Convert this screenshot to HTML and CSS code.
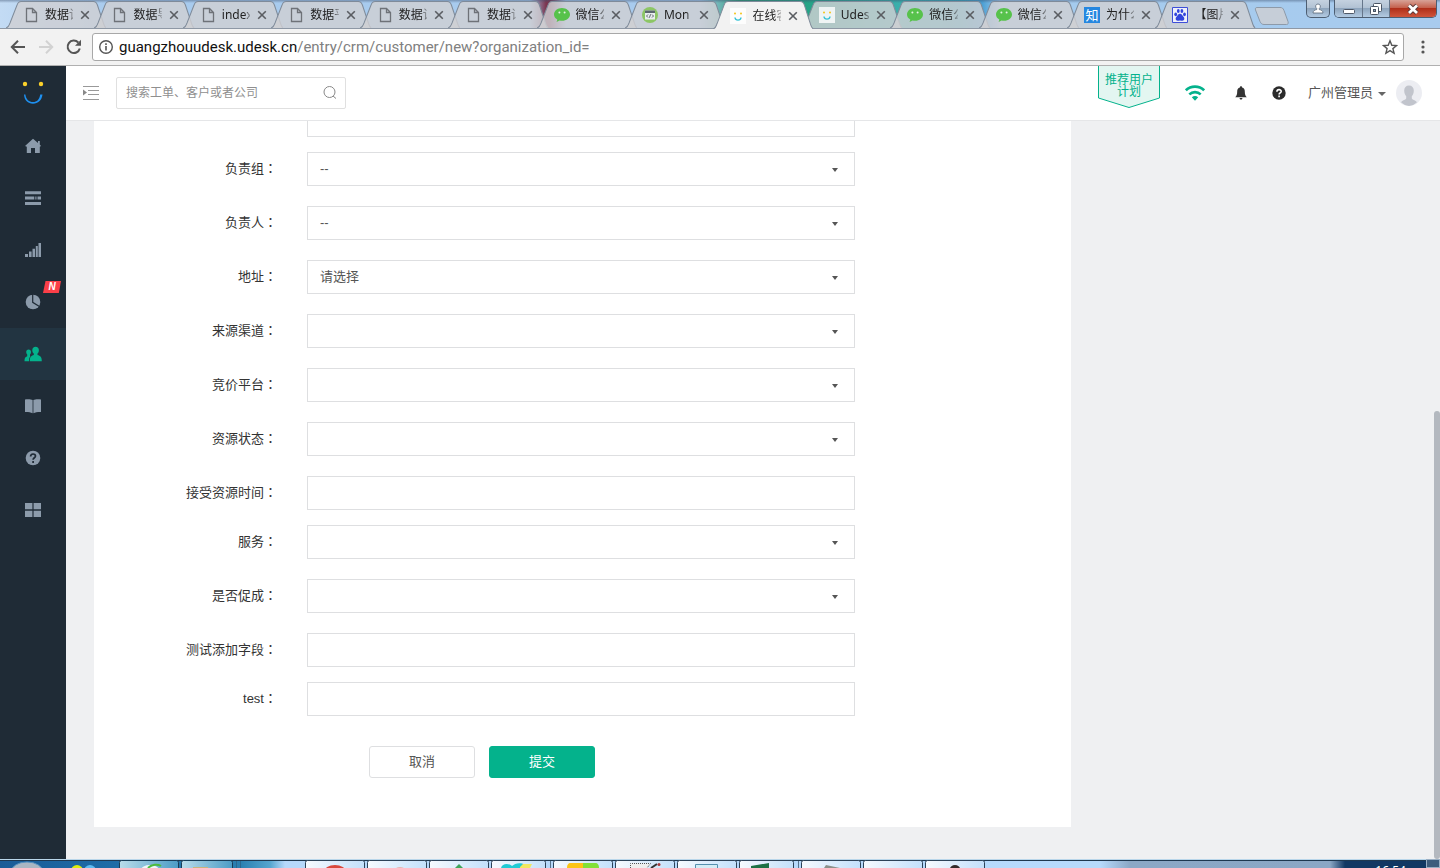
FILE: index.html
```html
<!DOCTYPE html>
<html lang="zh-CN">
<head>
<meta charset="utf-8">
<title>在线客服</title>
<link rel="stylesheet" href="styles.css">
</head>
<body>
<svg class="defs" aria-hidden="true">
  <symbol id="i-file" viewBox="0 0 16 16"><path d="M3.500 1.500h6l4 4v9h-10zM9.500 1.500v4h4" fill="none" stroke="#6e7278" stroke-width="1.300"/></symbol>
  <symbol id="i-wechat" viewBox="0 0 16 16"><path d="M8 1C3.600 1 0 3.800 0 7.400c0 2.200 1.300 3.900 3.300 5L2.600 15l3-1.600c.8.2 1.600.3 2.400.3 4.400 0 8-2.800 8-6.300S12.400 1 8 1z" fill="#57c24b"/><circle cx="5.400" cy="5.500" r="1" fill="#e4f3e2"/><circle cx="10.600" cy="5.500" r="1" fill="#e4f3e2"/></symbol>
  <symbol id="i-udesk" viewBox="0 0 16 16"><path d="M0 0h16v16H0z" fill="#fff" fill-opacity=".8"/><circle cx="5" cy="5.500" r="1" fill="#f5c518"/><circle cx="11" cy="5.500" r="1" fill="#f5c518"/><path d="M5 9.500c.4 3.500 5.600 3.500 6 0" fill="none" stroke="#35c3d6" stroke-width="1.400"/></symbol>
  <symbol id="i-x" viewBox="0 0 10 10"><path d="M1.200 1.200l7.600 7.600M8.800 1.200L1.200 8.800" stroke="#5a5d62" stroke-width="1.600"/></symbol>
  <symbol id="i-shape" viewBox="0 0 100 28" preserveAspectRatio="none"><path d="M0 28C3 27 3 25 4 23L11 5C12 2 13 1.500 15 1.500H87C89 1.500 90 2 91 5L97 23C98 26 98 27 100 28" stroke-width="1"/></symbol>
</svg>

<header class="browser">
  <div class="strip">
    <nav class="tabs" aria-label="标签页">
      <div class="tab"><svg class="tab-shape"><use href="#i-shape"/></svg><svg class="fav"><use href="#i-file"/></svg><span class="tab-title">数据记录</span><button class="tab-x" aria-label="关闭"><svg><use href="#i-x"/></svg></button></div>
      <div class="tab"><svg class="tab-shape"><use href="#i-shape"/></svg><svg class="fav"><use href="#i-file"/></svg><span class="tab-title">数据导出</span><button class="tab-x" aria-label="关闭"><svg><use href="#i-x"/></svg></button></div>
      <div class="tab"><svg class="tab-shape"><use href="#i-shape"/></svg><svg class="fav"><use href="#i-file"/></svg><span class="tab-title">index</span><button class="tab-x" aria-label="关闭"><svg><use href="#i-x"/></svg></button></div>
      <div class="tab"><svg class="tab-shape"><use href="#i-shape"/></svg><svg class="fav"><use href="#i-file"/></svg><span class="tab-title">数据平台</span><button class="tab-x" aria-label="关闭"><svg><use href="#i-x"/></svg></button></div>
      <div class="tab"><svg class="tab-shape"><use href="#i-shape"/></svg><svg class="fav"><use href="#i-file"/></svg><span class="tab-title">数据记录</span><button class="tab-x" aria-label="关闭"><svg><use href="#i-x"/></svg></button></div>
      <div class="tab"><svg class="tab-shape"><use href="#i-shape"/></svg><svg class="fav"><use href="#i-file"/></svg><span class="tab-title">数据记录</span><button class="tab-x" aria-label="关闭"><svg><use href="#i-x"/></svg></button></div>
      <div class="tab"><svg class="tab-shape"><use href="#i-shape"/></svg><svg class="fav"><use href="#i-wechat"/></svg><span class="tab-title">微信公众</span><button class="tab-x" aria-label="关闭"><svg><use href="#i-x"/></svg></button></div>
      <div class="tab"><svg class="tab-shape"><use href="#i-shape"/></svg><svg class="fav" viewBox="0 0 16 16"><circle cx="8" cy="8" r="8" fill="#8cc665"/><rect x="3" y="3.500" width="10" height="9" fill="#e9edf0"/><path d="M3 3.500h10v2.500H3z" fill="#5c6770"/><path d="M6 7.500L4.500 9 6 10.500M10 7.500L11.500 9 10 10.500M8.600 7.300l-1.200 3.400" fill="none" stroke="#4d565e" stroke-width=".9"/></svg><span class="tab-title">Mon</span><button class="tab-x" aria-label="关闭"><svg><use href="#i-x"/></svg></button></div>
      <div class="tab tab-active"><svg class="tab-shape"><use href="#i-shape"/></svg><svg class="fav"><use href="#i-udesk"/></svg><span class="tab-title">在线客服</span><button class="tab-x" aria-label="关闭"><svg><use href="#i-x"/></svg></button></div>
      <div class="tab"><svg class="tab-shape"><use href="#i-shape"/></svg><svg class="fav"><use href="#i-udesk"/></svg><span class="tab-title">Udesk</span><button class="tab-x" aria-label="关闭"><svg><use href="#i-x"/></svg></button></div>
      <div class="tab"><svg class="tab-shape"><use href="#i-shape"/></svg><svg class="fav"><use href="#i-wechat"/></svg><span class="tab-title">微信公众</span><button class="tab-x" aria-label="关闭"><svg><use href="#i-x"/></svg></button></div>
      <div class="tab"><svg class="tab-shape"><use href="#i-shape"/></svg><svg class="fav"><use href="#i-wechat"/></svg><span class="tab-title">微信公众</span><button class="tab-x" aria-label="关闭"><svg><use href="#i-x"/></svg></button></div>
      <div class="tab"><svg class="tab-shape"><use href="#i-shape"/></svg><span class="fav fav-zhi">知</span><span class="tab-title">为什么</span><button class="tab-x" aria-label="关闭"><svg><use href="#i-x"/></svg></button></div>
      <div class="tab"><svg class="tab-shape"><use href="#i-shape"/></svg><svg class="fav" viewBox="0 0 16 16"><path d="M.5.5h15v15H.5z" fill="#eef0fb" stroke="#3e4fd8"/><g fill="#3244dc"><ellipse cx="3.700" cy="7.300" rx="1.400" ry="1.900"/><ellipse cx="6.300" cy="4" rx="1.400" ry="1.900"/><ellipse cx="9.900" cy="4" rx="1.400" ry="1.900"/><ellipse cx="12.500" cy="7.300" rx="1.400" ry="1.900"/><path d="M8 6.800c2 0 2 1.600 3.300 2.700 1.800 1.600 1.100 4.200-.8 4.200-1 0-1.500-.3-2.500-.3s-1.500.3-2.500.3c-1.900 0-2.600-2.600-.8-4.200C6 8.400 6 6.800 8 6.800z"/></g></svg><span class="tab-title">【图片】</span><button class="tab-x" aria-label="关闭"><svg><use href="#i-x"/></svg></button></div>
    </nav>
    <button class="new-tab" aria-label="新标签页"><svg viewBox="0 0 36 18"><path d="M3 .5h23c2 0 3 .5 4 3l4 11c.6 2 0 3-1.500 3H10c-2 0-3-1-4-3L1.500 3C1 1.500 1.500.5 3 .5z" fill="#c6ced8" stroke="#8d9aa9"/></svg></button>
    <div class="win">
      <button class="win-btn win-user" aria-label="用户"><svg viewBox="0 0 12 12"><path d="M6 1a2.400 2.400 0 0 1 1.300 4.400v1.200c2.200.3 3.700 1.300 3.700 3.400H1c0-2.100 1.500-3.100 3.700-3.400V5.400A2.400 2.400 0 0 1 6 1z" fill="#fff" stroke="#59687a" stroke-width=".8"/></svg></button>
      <div class="win-group">
        <button class="win-btn win-min" aria-label="最小化"><svg viewBox="0 0 12 12"><rect x=".5" y="6.500" width="11" height="4" rx="1" fill="#fff" stroke="#4f5968"/></svg></button>
        <button class="win-btn win-max" aria-label="还原"><svg viewBox="0 0 12 12"><g fill="#fff" stroke="#4a5564"><rect x="3.500" y=".5" width="8" height="8" rx="1"/><rect x=".5" y="3.500" width="8" height="8" rx="1"/><rect x="3.500" y="6.500" width="2" height="2" fill="#8ea5bd"/></g></svg></button>
        <button class="win-btn win-close" aria-label="关闭窗口"><svg viewBox="0 0 12 12"><path d="M2 2.500l8 7.500M10 2.500L2 10" stroke="#5b3a3a" stroke-width="4.600"/><path d="M2 2.500l8 7.500M10 2.500L2 10" stroke="#fff" stroke-width="2.800"/></svg></button>
      </div>
    </div>
  </div>
  <div class="toolbar">
    <button class="tool" aria-label="后退"><svg viewBox="0 0 16 16"><path d="M15 8H2.500M8 1.800L1.800 8 8 14.200" fill="none" stroke="#555" stroke-width="2"/></svg></button>
    <button class="tool" aria-label="前进"><svg viewBox="0 0 16 16"><path d="M1 8h12.500M8 1.800L14.200 8 8 14.200" fill="none" stroke="#d2d2d2" stroke-width="2"/></svg></button>
    <button class="tool" aria-label="刷新"><svg viewBox="0 0 16 16"><path d="M13.800 9.500A6.200 6.200 0 1 1 12.300 3.500" fill="none" stroke="#555" stroke-width="2"/><path d="M15 .8v6H9z" fill="#555"/></svg></button>
    <div class="omnibox">
      <svg class="info" viewBox="0 0 16 16"><circle cx="8" cy="8" r="6.300" fill="none" stroke="#555" stroke-width="1.400"/><path d="M8 7v4.500M8 4.300v1.600" stroke="#555" stroke-width="1.600"/></svg>
      <div class="url" role="textbox" aria-label="地址栏" contenteditable="true" spellcheck="false">guangzhouudesk.udesk.cn<span class="url-path">/entry/crm/customer/new?organization_id=</span></div>
      <button class="star" aria-label="收藏"><svg viewBox="0 0 16 16"><path d="M8 1.800l1.800 4.500 4.800.3-3.700 3 1.200 4.700L8 11.700l-4.100 2.600 1.200-4.700-3.700-3 4.800-.3z" fill="none" stroke="#555" stroke-width="1.400"/></svg></button>
    </div>
    <button class="more" aria-label="菜单"><svg viewBox="0 0 4 14"><g fill="#555"><circle cx="2" cy="2" r="1.600"/><circle cx="2" cy="7" r="1.600"/><circle cx="2" cy="12" r="1.600"/></g></svg></button>
  </div>
</header>

<div class="app">
  <nav class="side" aria-label="主导航">
    <a class="logo" href="#" aria-label="Udesk"><svg viewBox="0 0 22 24"><circle cx="3" cy="3" r="2.200" fill="#fbd02b"/><circle cx="19" cy="3" r="2.200" fill="#fbd02b"/><path d="M2 13.500c.3 6 4 9.200 9 9.200s8.800-3.200 9.500-9.200h-2.300c-.7 5-3.200 7.500-7.200 7.500s-7-2.500-7.600-7.500z" fill="#1e90f0"/></svg></a>
    <a class="nav" href="#" aria-label="首页"><svg viewBox="0 0 16 16"><path d="M8 .8L13 5V3h1.800v3.500L16 8l-1.200.8V15H10v-5H6v5H1.800V8.800L0 8z"/></svg></a>
    <a class="nav" href="#" aria-label="工单"><svg viewBox="0 0 16 16"><path d="M0 1.200h16v3H0zM0 6.500h9.300v3H0zM10.300 6.500h1.200v3h-1.200zM12.500 6.500H16v3h-3.500zM0 12h16v3H0z"/></svg></a>
    <a class="nav" href="#" aria-label="报表"><svg viewBox="0 0 16 16"><path d="M0 12h3v3H0zM4 9.500h2.600V15H4zM7.500 6.800H10V15H7.500zM10.800 4h2v11h-2zM13.500 1H16v14h-2.500z"/></svg></a>
    <a class="nav" href="#" aria-label="统计"><svg viewBox="0 0 16 16"><circle cx="8" cy="8" r="7.300"/><path d="M7.700 0v8.300l6.300 3.900" fill="none" stroke="#1f2b36" stroke-width="1.200"/></svg><span class="new">N</span></a>
    <a class="nav nav-on" href="#" aria-label="客户"><svg viewBox="0 0 16 16"><path d="M3.600 3.400C5.100 3.400 6 4.500 6 6c0 1.100-.4 1.900-1 2.500v1.400l.4.300C4.300 11.300 4 12.600 4 15.200H-.5c0-3.200.6-4.300 2.700-5V8.500C1.600 7.900 1.200 7.100 1.200 6c0-1.500.9-2.600 2.400-2.600z"/><path d="M10.600.8c2 0 3.300 1.500 3.300 3.400 0 1.600-.6 2.700-1.400 3.400v1.300c2.800.8 4.300 1.800 4.300 6.300H4.800c0-4.500 1.300-5.500 4-6.300V7.600C7.900 6.900 7.300 5.800 7.300 4.200 7.300 2.300 8.600.8 10.600.8z"/></svg></a>
    <a class="nav" href="#" aria-label="知识库"><svg viewBox="0 0 16 16"><path d="M0 1.500C3 .8 6 1.200 7.600 2v13.200C5.500 14.400 3 13.800 0 14zM16 1.500C13 .8 10 1.200 8.400 2v13.200c2.100-.8 4.600-1.400 7.600-1.200z"/></svg></a>
    <a class="nav" href="#" aria-label="帮助"><svg viewBox="0 0 16 16"><circle cx="8" cy="8" r="7.300"/><path d="M5.600 6.500c0-3.300 4.900-3.200 4.900-.4 0 1.700-2.400 1.700-2.400 3.700M8.100 10.900v2" fill="none" stroke="#1f2b36" stroke-width="1.700"/></svg></a>
    <a class="nav" href="#" aria-label="应用"><svg viewBox="0 0 16 16"><path d="M0 1h7.400v6.200H0zM8.600 1H16v6.200H8.600zM0 8.800h7.400V15H0zM8.600 8.800H16V15H8.600z"/></svg></a>
  </nav>

  <div class="main">
    <header class="top">
      <button class="fold" aria-label="展开菜单"><svg viewBox="0 0 16 14"><path d="M0 .5h16M5 4.500h11M5 8.500h11M0 13.500h16" stroke="#999"/><path d="M0 3.500l4 3-4 3z" fill="#888"/></svg></button>
      <form class="search">
        <input class="search-input" type="text" aria-label="搜索" placeholder="搜索工单、客户或者公司">
        <button class="search-btn" type="button" aria-label="搜索"><svg viewBox="0 0 14 14"><circle cx="6.500" cy="6" r="5.500" fill="none" stroke="#888"/><path d="M10 10l3 2.500" stroke="#888"/></svg></button>
      </form>
      <a class="plan" href="#"><svg class="plan-bg" viewBox="0 0 62 42"><path d="M.5-1v33L31 41.500 61.500 32V-1z" fill="#e3f6f1" stroke="#04b28c"/></svg><span class="plan-text">推荐用户<br>计划</span></a>
      <button class="ico wifi" aria-label="网络"><svg viewBox="0 0 20 16"><g fill="none" stroke="#04b28c" stroke-width="2.600"><path d="M.9 5.300c5-4.900 13.200-4.900 18.200 0M4.300 9.400c3.200-3.100 8.200-3.100 11.400 0"/></g><path d="M6.800 12.300c1.900-1.900 4.500-1.900 6.400 0L10 15.800z" fill="#04b28c"/></svg></button>
      <button class="ico bell" aria-label="通知"><svg viewBox="0 0 12 14"><path d="M6 .3c.7 0 1.100.5 1.100 1.200 2 .5 2.700 2 2.700 4 0 3 .6 4.300 2 5.700H.2c1.400-1.400 2-2.700 2-5.700 0-2 .7-3.500 2.700-4C4.900.8 5.300.3 6 .3zM4.600 12h2.800c0 1-.6 1.500-1.400 1.500S4.600 13 4.600 12z" fill="#333"/></svg></button>
      <button class="ico help" aria-label="帮助"><svg viewBox="0 0 14 14"><circle cx="7" cy="7" r="6.700" fill="#2b2b2b"/><path d="M4.900 5.700c0-2.800 4.300-2.700 4.300-.3 0 1.500-2.100 1.500-2.100 3.100M7.100 9.600v1.700" fill="none" stroke="#fff" stroke-width="1.600"/></svg></button>
      <button class="user"><span>广州管理员</span><i class="user-caret"></i></button>
      <svg class="avatar" viewBox="0 0 26 26"><circle cx="13" cy="13" r="13" fill="#ecedf2"/><path d="M13 5.500c3 0 4.800 2 4.800 5s-1 4.500-2 5.800v2c0 1.700 4.200 1.700 5 4.200A13 13 0 0 1 13 26a13 13 0 0 1-7.800-3.500c.8-2.500 5-2.500 5-4.200v-2c-1-1.300-2-2.800-2-5.800s1.800-5 4.800-5z" fill="#c1c4cc"/></svg>
    </header>

    <main class="content">
      <form class="card">
        <div class="row row-text"><label for="f0"></label><input id="f0" class="field" type="text" aria-label="字段"></div>
        <div class="row"><label for="f1">负责组<span class="colon" lang="zh-Hant">：</span></label><div class="pick"><select id="f1" class="field"><option>--</option></select></div></div>
        <div class="row"><label for="f2">负责人<span class="colon" lang="zh-Hant">：</span></label><div class="pick"><select id="f2" class="field"><option>--</option></select></div></div>
        <div class="row"><label for="f3">地址<span class="colon" lang="zh-Hant">：</span></label><div class="pick"><select id="f3" class="field"><option>请选择</option></select></div></div>
        <div class="row"><label for="f4">来源渠道<span class="colon" lang="zh-Hant">：</span></label><div class="pick"><select id="f4" class="field"><option></option></select></div></div>
        <div class="row"><label for="f5">竞价平台<span class="colon" lang="zh-Hant">：</span></label><div class="pick"><select id="f5" class="field"><option></option></select></div></div>
        <div class="row"><label for="f6">资源状态<span class="colon" lang="zh-Hant">：</span></label><div class="pick"><select id="f6" class="field"><option></option></select></div></div>
        <div class="row row-text"><label for="f7">接受资源时间<span class="colon" lang="zh-Hant">：</span></label><input id="f7" class="field" type="text"></div>
        <div class="row"><label for="f8">服务<span class="colon" lang="zh-Hant">：</span></label><div class="pick"><select id="f8" class="field"><option></option></select></div></div>
        <div class="row"><label for="f9">是否促成<span class="colon" lang="zh-Hant">：</span></label><div class="pick"><select id="f9" class="field"><option></option></select></div></div>
        <div class="row row-text"><label for="f10">测试添加字段<span class="colon" lang="zh-Hant">：</span></label><input id="f10" class="field" type="text"></div>
        <div class="row row-text"><label for="f11">test<span class="colon" lang="zh-Hant">：</span></label><input id="f11" class="field" type="text"></div>
        <div class="actions"><button class="btn" type="button">取消</button><button class="btn btn-main" type="button">提交</button></div>
      </form>
      <div class="thumb"></div>
    </main>
  </div>
</div>

<footer class="taskbar">
  <svg class="tasks" viewBox="0 0 1000 9" aria-hidden="true">
    <defs>
      <linearGradient id="g1"><stop offset="0" stop-color="#f6faff"/><stop offset="1" stop-color="#c3e0fb"/></linearGradient>
      <linearGradient id="g2"><stop offset="0" stop-color="#b9dcea"/><stop offset="1" stop-color="#4b9cc6"/></linearGradient>
    </defs>
    <ellipse cx="27" cy="13" rx="16" ry="10" fill="#aab6c2" stroke="#5591bf"/>
    <circle cx="77" cy="12" r="6" fill="#dfee0c"/><circle cx="90" cy="12" r="6" fill="#5fbcf2"/>
    <g fill="url(#g2)" stroke="#173d58"><rect x="119.500" y="1.500" width="59" height="14" rx="2"/><rect x="181.500" y="1.500" width="51" height="14" rx="2"/></g>
    <path d="M236.500 2v8M240.500 2v8" stroke="#2a6890"/>
    <g fill="url(#g1)" stroke="#2c4258">
      <rect x="305.500" y="1.500" width="59" height="14" rx="2"/><rect x="367.500" y="1.500" width="59" height="14" rx="2"/><rect x="429.500" y="1.500" width="59" height="14" rx="2"/><rect x="491.500" y="1.500" width="54" height="14" rx="2"/>
      <rect x="553.500" y="1.500" width="59" height="14" rx="2"/><rect x="615.500" y="1.500" width="59" height="14" rx="2"/><rect x="677.500" y="1.500" width="59" height="14" rx="2"/><rect x="739.500" y="1.500" width="54" height="14" rx="2"/>
      <rect x="801.500" y="1.500" width="59" height="14" rx="2"/><rect x="863.500" y="1.500" width="59" height="14" rx="2"/><rect x="925.500" y="1.500" width="59" height="14" rx="2"/>
    </g>
    <path d="M550.500 2v8M798.500 2v8" stroke="#57738d"/>
    <ellipse cx="150" cy="11" rx="9" ry="5" fill="#eef7f8"/><path d="M148 9c4-4 10-4 13-2" fill="none" stroke="#4dbb3c" stroke-width="2"/>
    <path d="M193 8h15v1h-15z" fill="#c9b37c"/>
    <ellipse cx="335" cy="13" rx="11" ry="7" fill="#d8483d"/><ellipse cx="400" cy="12" rx="6" ry="4" fill="#e3b8b4"/>
    <path d="M455 9l4-4 4 4z" fill="#3fa45b"/>
    <path d="M501 9c1-5 8-5 11-2 3-3 9-4 14-1l-4 3z" fill="#20cbd5"/><path d="M520 8l3-3h9l-2 4h-10z" fill="#f2e860"/>
    <path d="M567 9c0-3 1-5 4-5h12v5z" fill="#fcc415"/><path d="M583 4h12c3 0 4 2 4 5h-16z" fill="#82e038"/>
    <path d="M630.500 9V4.500h20L647 9" fill="#eee" stroke="#555" stroke-dasharray="1 1"/><path d="M651 9l6-4" stroke="#333" stroke-width="2"/><circle cx="659" cy="5.500" r="1.500" fill="#a9383b"/>
    <path d="M695.500 9V5.500h22V9" fill="#d4ecf6" stroke="#558fae"/>
    <path d="M751 9V7l18-3v5z" fill="#1c7145"/><path d="M826 6l14 3h-16z" fill="#8c918c"/><ellipse cx="955" cy="10" rx="5" ry="4" fill="#332b2b"/>
  </svg>
  <div class="tray"><time class="clock">16:54</time><button class="desktop" aria-label="显示桌面"></button></div>
</footer>
</body>
</html>
```
FILE: styles.css
```css
* { box-sizing: border-box; }
body {
  margin: 0;
  height: 100vh;
  display: flex;
  flex-direction: column;
  overflow: hidden;
  font: 13px/20px "Liberation Sans", "Noto Sans CJK SC", sans-serif;
  color: #333;
}
button, input, select { font: inherit; color: inherit; }
button { padding: 0; border: 0; background: none; cursor: pointer; }
svg { display: block; }
a { color: inherit; text-decoration: none; }
.defs { display: none; }

/* browser chrome */
.browser { flex: none; }
.strip {
  display: flex;
  height: 29px;
  padding: 0 3px 0 6px;
  background:
    linear-gradient(rgba(60, 80, 110, .45), rgba(60, 80, 110, 0) 3px),
    linear-gradient(90deg, #c3dbf4 0, #a8cbee 110px, #a8cbee 530px, #7b3550 546px, #7b3550 550px, #a8cbee 566px, #a8cbee 700px, #2d9c74 740px, #25a385 805px, #3aafac 900px, #36a6bb 960px, #4a9fd4 982px, #a4cbee 1000px, #a8cbee 1440px);
  border-bottom: 1px solid #8e98a5;
}
.tabs { flex: 1; display: flex; min-width: 0; }
.tab {
  position: relative;
  flex: 1 1 0;
  min-width: 0;
  display: flex;
  align-items: center;
  height: 28px;
  padding: 2px 13px 0 17px;
  font: 12px/18px "Noto Sans", "Noto Sans CJK SC", sans-serif;
  color: #222;
}
.tab + .tab { margin-left: -12px; }
.tab-shape { position: absolute; left: 0; top: 0; width: 100%; height: 28px; fill: #cfd0d3; fill-opacity: .82; stroke: #7f8b9a; }
.tab-active { z-index: 1; height: 29px; margin-bottom: -1px; }
.tab-active .tab-shape { height: 29px; fill: #f2f2f2; fill-opacity: 1; }
.fav { position: relative; flex: none; width: 16px; height: 16px; }
.fav-zhi { background: #2587e0; color: #fff; font-size: 13px; line-height: 16px; text-align: center; }
.tab-title {
  position: relative;
  flex: 1;
  min-width: 0;
  margin-left: 6px;
  overflow: hidden;
  white-space: nowrap;
  -webkit-mask-image: linear-gradient(90deg, #000 22px, transparent 31px);
  mask-image: linear-gradient(90deg, #000 22px, transparent 31px);
}
.tab-x { position: relative; width: 10px; height: 10px; margin: 0 3px 0 7px; }
.tab-x svg { width: 10px; height: 10px; }
.new-tab { width: 36px; height: 18px; margin: 7px 16px 0 -2px; }
.new-tab svg { width: 36px; height: 18px; }
.win { display: flex; gap: 4px; align-items: flex-start; }
.win-btn {
  display: flex;
  align-items: center;
  justify-content: center;
  height: 18px;
  background: linear-gradient(#c5d2e0, #b0c1d3 48%, #8ea5bd 50%, #b3cbe2);
}
.win-btn svg { width: 12px; height: 12px; }
.win-user, .win-group { border: 1px solid #4d5e72; border-top: 0; border-radius: 0 0 5px 5px; overflow: hidden; }
.win-user { width: 24px; }
.win-group { display: flex; }
.win-group .win-btn { height: 17px; border-right: 1px solid #66768a; }
.win-min { width: 28px; }
.win-max { width: 27px; }
.win-group .win-close { width: 46px; border-right: 0; background: linear-gradient(#d8a397, #c4604c 46%, #b0301a 50%, #d0553b); }

.toolbar {
  display: flex;
  align-items: center;
  height: 37px;
  padding: 0 15px 1px 10px;
  background: #f2f2f2;
  border-bottom: 1px solid #b0b0b0;
}
.tool { width: 16px; height: 16px; margin-right: 12px; }
.tool svg { width: 16px; height: 16px; }
.tool + .tool + .tool { margin-right: 10px; }
.omnibox {
  flex: 1;
  display: flex;
  align-items: center;
  height: 28px;
  padding: 0 5px;
  border: 1px solid #a8a8a8;
  border-radius: 3px;
  background: #fff;
}
.info { width: 16px; height: 16px; }
.url { flex: 1; margin-left: 5px; font: 15px/24px Roboto, sans-serif; color: #111; white-space: nowrap; outline: 0; }
.url-path { color: #808080; }
.star svg { width: 16px; height: 16px; }
.more { width: 4px; margin-left: 17px; }
.more svg { width: 4px; height: 14px; }

/* application */
.app { flex: 1; display: flex; min-height: 0; }
.side { flex: none; width: 66px; background: #1f2b36; }
.logo { display: flex; justify-content: center; height: 54px; padding-top: 15px; }
.logo svg { width: 22px; height: 24px; }
.nav { position: relative; display: flex; align-items: center; justify-content: center; height: 52px; fill: #8c9bab; }
.nav svg { width: 16px; height: 16px; overflow: visible; }
.nav-on { background: #223441; fill: #04b28c; }
.new {
  position: absolute;
  left: 43px;
  top: 5px;
  width: 18px;
  height: 12px;
  background: #fb3f48;
  clip-path: polygon(14% 0, 100% 0, 88% 100%, 0 100%);
  color: #fff;
  font: italic bold 10px/12px "Liberation Sans", sans-serif;
  text-align: center;
}
.main { flex: 1; min-width: 0; display: flex; flex-direction: column; }
.top {
  flex: none;
  display: flex;
  align-items: center;
  height: 55px;
  padding: 0 18px 0 17px;
  background: #fff;
  border-bottom: 1px solid #e5e6e8;
}
.fold svg { width: 16px; height: 14px; }
.search { display: flex; align-items: center; width: 230px; height: 32px; margin: 0 auto 0 17px; border: 1px solid #e0e0e0; border-radius: 2px; }
.search-input { flex: 1; min-width: 0; padding: 0 0 0 9px; border: 0; outline: 0; background: none; font-size: 12px; }
.search-input::placeholder { color: #8f8f8f; opacity: 1; }
.search-btn { margin-right: 8px; }
.search-btn svg { width: 14px; height: 14px; }
.plan { position: relative; align-self: flex-start; width: 62px; height: 42px; padding-top: 8px; margin-right: 25px; color: #04b28c; font-size: 12px; line-height: 12px; text-align: center; }
.plan-bg { position: absolute; left: 0; top: 0; width: 62px; height: 42px; }
.plan-text { position: relative; }
.wifi { width: 20px; margin-right: 30px; }
.bell { width: 12px; margin-right: 25px; }
.help { width: 14px; margin-right: 22px; }
.user { display: flex; align-items: center; gap: 5px; margin-right: 10px; color: #555; }
.user-caret { margin-top: 2px; border: 4px solid transparent; border-top-color: #666; border-bottom: 0; }
.avatar { width: 26px; height: 26px; }

/* form */
.content {
  position: relative;
  flex: 1;
  min-height: 0;
  display: flex;
  flex-direction: column;
  justify-content: flex-end;
  padding: 0 369px 32px 28px;
  overflow: hidden;
  background: #eff0f2;
}
.card { flex: none; padding: 20px 216px 49px 0; background: #fff; }
.row { display: grid; grid-template-columns: 213px minmax(0, 1fr); margin-bottom: 20px; }
.row-text { margin-bottom: 15px; }
.row label { padding: 6px 30px 0 0; text-align: right; }
.colon { font-family: "Noto Sans CJK TC", sans-serif; }
.pick { position: relative; }
.pick::after {
  content: "";
  position: absolute;
  right: 17px;
  top: 16px;
  border: 3px solid transparent;
  border-top: 4px solid #555;
  border-bottom: 0;
  pointer-events: none;
}
.field {
  display: block;
  width: 100%;
  height: 34px;
  padding: 0 12px;
  border: 1px solid #dedfe1;
  border-radius: 0;
  outline: 0;
  background: #fff;
  color: #555;
  appearance: none;
}
.actions { display: flex; gap: 14px; margin-top: 30px; padding-left: 275px; }
.btn { width: 106px; height: 32px; border: 1px solid #dedfe1; border-radius: 3px; background: #fff; color: #555; }
.btn-main { border-color: #04b28c; background: #04b28c; color: #fff; }
.thumb { position: absolute; right: 0; top: 290px; bottom: 0; width: 6px; border-radius: 3px; background: #b3b8bf; }

/* system taskbar */
.taskbar {
  flex: none;
  display: flex;
  justify-content: space-between;
  height: 9px;
  overflow: hidden;
  background:
    linear-gradient(#b9d6ea 1px, #1e3850 1px, #1e3850 2px, transparent 2px),
    linear-gradient(90deg, #1b5c97 0, #1d6aa5 100px, #2a7fb0 240px, #55a5cf 270px, #b6d8fb 285px, #b6dafc 1100px, #8ba8c6 1130px, #8aa7c5 1330px, #123863 1345px, #123863 100%);
}
.tasks { flex: none; width: 1000px; height: 9px; }
.tray { display: flex; gap: 20px; color: #fff; }
.clock { padding-top: 5px; font: 12px/14px "Noto Sans", sans-serif; }
.desktop { width: 14px; height: 9px; border: 1px solid #9aafc4; background: #3e5c7c; }
```
